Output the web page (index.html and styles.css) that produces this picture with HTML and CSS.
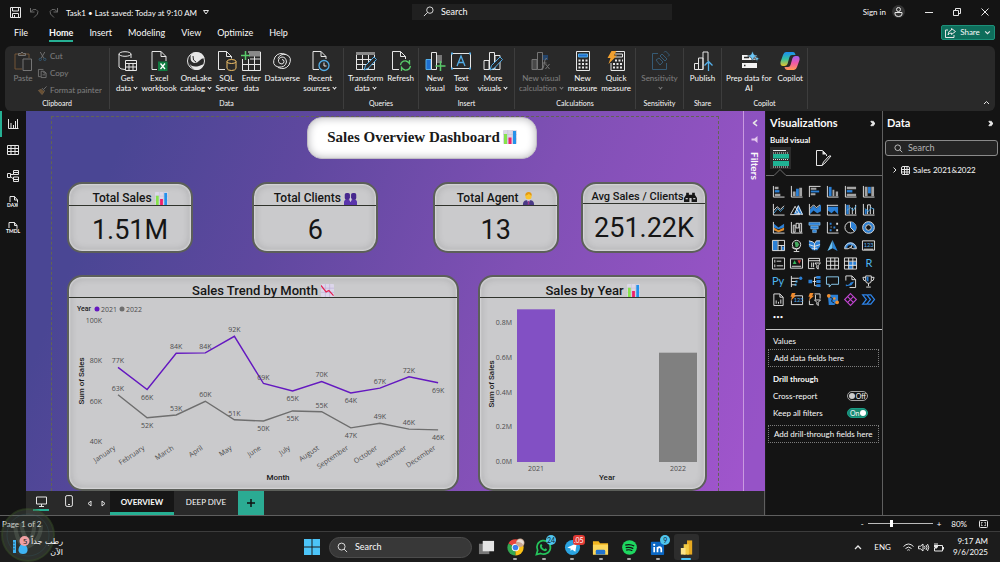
FILE: index.html
```html
<!DOCTYPE html>
<html lang="en">

<head>
  <meta charset="UTF-8">
  <meta name="viewport" content="width=device-width, initial-scale=1.0">
  <title>Task1 - Power BI</title>
  <link rel="stylesheet" href="styles.css">
</head>

<body>
  <!-- shared icons -->
  <svg class="sprite" aria-hidden="true">
    <symbol id="chart" viewBox="0 0 14 14">
      <rect width="14" height="14" rx="1" fill="#dcd8e6" />
      <path d="M0 4.5h14M0 9h14M4.7 0v14M9.3 0v14" stroke="#c3bdd6" stroke-width=".5" />
      <rect x="1" y="4" width="3" height="10" fill="#86e34c" />
      <rect x="5.5" y="7.5" width="3" height="6.5" fill="#f0206a" />
      <rect x="10" y="1" width="3" height="13" fill="#2492ea" />
    </symbol>
    <symbol id="chart-down" viewBox="0 0 14 14">
      <rect width="14" height="14" rx="1" fill="#dcd6ea" />
      <path d="M0 4.5h14M0 9h14M4.7 0v14M9.3 0v14" stroke="#b9a9d8" stroke-width=".6" />
      <path d="M0 1.5 3.5 6l2 2.5L8.5 7l5 5.5" fill="none" stroke="#e5204f" stroke-width="1.3" />
    </symbol>
    <symbol id="people" viewBox="0 0 14 14">
      <rect x=".8" y="1" width="5.6" height="7.5" rx="2" fill="#47288e" />
      <rect x="7.6" y="1" width="5.6" height="7.5" rx="2" fill="#47288e" />
      <path d="M0 14v-3q0-2.5 3.5-2.8Q6.5 8.5 7 10.5q.5-2 3.5-2.3Q14 8.5 14 11v3z" fill="#5a35ac" />
      <path d="M7 6v4.5M5.5 7.5h3" stroke="#d8d0ee" stroke-width=".7" />
    </symbol>
    <symbol id="agent" viewBox="0 0 14 14">
      <path d="M1 14q0-5 4-5h4q4 0 4 5z" fill="#4a3a86" />
      <path d="M5.5 8h3L7 13z" fill="#e9e6f4" />
      <path d="M6.6 9.5h.9l.5 4H6z" fill="#a03a8a" />
      <circle cx="7" cy="4.8" r="3.3" fill="#fbc52e" />
      <path d="M3.5 4q0-4 3.7-4 3.5 0 3.3 4-2-.5-3-2-1.5 1.5-4 2z" fill="#e59a12" />
    </symbol>
    <symbol id="scale" viewBox="0 0 12 10">
      <path d="M2 1h2.5v2h3V1H10v2l2 3v3.5H7V6H5v3.5H0V6l2-3z" fill="#161616" />
      <path d="M1.5 6.5h2M8.5 6.5h2" stroke="#c8c8ca" />
    </symbol>
    <symbol id="search" viewBox="0 0 12 12">
      <circle cx="7.5" cy="4.5" r="3.5" class="l" />
      <path d="M5 7 1 11" class="l" />
    </symbol>
    <symbol id="search-r" viewBox="0 0 12 12">
      <circle cx="5" cy="5" r="3.8" class="l" />
      <path d="m7.7 7.7 3.3 3.3" class="l" />
    </symbol>
    <symbol id="down" viewBox="0 0 6 6"><path d="m1 2 2 2 2-2" class="l" /></symbol>
    <symbol id="dbl" viewBox="0 0 6 8"><path d="m1 1 2.5 3L1 7M3 1l2.5 3L3 7" class="l" stroke-width="1.5" /></symbol>
  </svg>

  <header class="titlebar">
    <div class="title-left">
      <button aria-label="Save"><svg width="11" height="11" viewBox="0 0 11 11"><path d="M.5.5h10v10h-10zM2.5.5v3.5h6V.5M2.5 10.5V6.5h6v4M4.5 8v2" class="l" /></svg></button>
      <button class="dim" aria-label="Undo"><svg width="11" height="11" viewBox="0 0 11 11"><path d="M1.5 1v4h4M1.5 5Q4 1.5 7 2.5q3 1.5 1.5 4.5L5 10.5" class="l" /></svg></button>
      <button class="dim" aria-label="Redo"><svg width="11" height="11" viewBox="0 0 11 11"><path d="M9.5 1v4h-4M9.5 5Q7 1.5 4 2.5 1 4 2.5 7L6 10.5" class="l" /></svg></button>
      <span class="file-name">Task1 • Last saved: Today at 9:10 AM</span>
      <svg width="6" height="5" viewBox="0 0 6 5"><path d="M.5.5h5L3 4z" class="l" /></svg>
    </div>
    <label class="top-search">
      <svg width="11" height="11"><use href="#search" /></svg>
      <input type="search" placeholder="Search" aria-label="Search">
    </label>
    <div class="title-right">
      <a href="#" class="sign-in">Sign in</a>
      <span class="avatar"><svg width="9" height="10" viewBox="0 0 9 10"><circle cx="4.5" cy="2.5" r="2" class="l" /><path d="M1 5.5h7V7q0 2.5-3.5 2.5T1 7z" class="l" /></svg></span>
      <button aria-label="Minimize"><svg width="8" height="8" viewBox="0 0 8 8"><path d="M0 4.5h8" class="l" /></svg></button>
      <button aria-label="Restore"><svg width="8" height="8" viewBox="0 0 8 8"><path d="M.5 2.5h5v5h-5zM2.5 2V.5h5v5H6" class="l" /></svg></button>
      <button aria-label="Close"><svg width="8" height="8" viewBox="0 0 8 8"><path d="m.5.5 7 7M7.5.5l-7 7" class="l" /></svg></button>
    </div>
  </header>

  <nav class="menu">
    <a href="#">File</a>
    <a href="#" class="active">Home</a>
    <a href="#">Insert</a>
    <a href="#">Modeling</a>
    <a href="#">View</a>
    <a href="#">Optimize</a>
    <a href="#">Help</a>
    <button class="share">
      <svg width="11" height="10" viewBox="0 0 11 10"><path d="M3 2H.5v7.5H9V7M6.5.5l4 3-4 3V5Q4 5 3 7q0-4 3.5-5z" class="l" /></svg>
      Share
      <svg width="7" height="7"><use href="#down" /></svg>
    </button>
  </nav>

  <section class="ribbon">
    <div class="group clipboard">
      <div class="items">
        <button class="tool off"><svg viewBox="0 0 20 20"><path d="M9 18H2V3h14v4" fill="none" stroke="#e0954a" /><path d="M5.5 4.5v-2h2q1.500-3 3 0h2v2zM10 8h8.500v11.500H10z" class="l" /></svg>Paste</button>
        <div class="stack">
          <button class="off"><svg viewBox="0 0 10 10"><path d="m2.5 0 4 7M7.5 0l-4 7" class="l" /><circle cx="2.5" cy="8.2" r="1.3" class="bs" /><circle cx="7.5" cy="8.2" r="1.3" class="bs" /></svg>Cut</button>
          <button class="off"><svg viewBox="0 0 10 10"><path d="M3 8.5H.5v-8H6M3.5 2.5h3l2.5 2v5H3.5zM6.5 2.5v2H9M5 6.5h3" class="l" /></svg>Copy</button>
          <button class="off"><svg viewBox="0 0 10 10"><path d="m9.5.5-3 3M4.5 2.5l3 3" class="l" /><path d="M4 3.5.5 5l4 4.5L7 6" fill="#c78a45" stroke="#e0a868" /></svg>Format painter</button>
        </div>
      </div>
      <h2>Clipboard</h2>
    </div>
    <div class="group data">
      <div class="items">
        <button class="tool"><svg viewBox="0 0 20 20"><ellipse cx="8" cy="3" rx="6" ry="2.3" class="l" /><path d="M2 3v13q1 2.5 6 2.5M14 3v4" class="l" /><path d="M8.5 9.5h11v10h-11z" class="l" /><path d="M8.5 12.5h11M8.5 16h11M12 12.5v7M16 12.5v7" class="l" /></svg><span>Get<br>data<i></i></span></button>
        <button class="tool"><svg viewBox="0 0 20 20"><path d="M8 18.5H3V.5h9l5 5V10M12 .5v5h5" class="l" /><rect x="9" y="10.5" width="9.5" height="9.5" fill="#107c41" /><path d="m11.5 12.5 4.5 5.5M16 12.5 11.5 18" stroke="#fff" stroke-width="1.3" /></svg><span>Excel<br>workbook</span></button>
        <button class="tool"><svg viewBox="0 0 20 20"><circle cx="10" cy="10" r="8.5" class="l" /><path d="M5 3.5q2-2.5 5-2.5 7 0 8.5 6-3 0-5 2.5T8 12Q3 10 5 3.5zM3 12q3 5 10 3l5-2q-1 5-6 6t-9-7z" fill="#e6e6e6" /><path d="M7 5q-.5 5 3 6" stroke="#292929" fill="none" /></svg><span>OneLake<br>catalog<i></i></span></button>
        <button class="tool"><svg viewBox="0 0 20 20"><path d="M8 18.5H1.5V.5h8l5 5v2M9.5.5v5h5" class="l" /><ellipse cx="14.5" cy="10.5" rx="4.5" ry="2" class="y" /><path d="M10 10.5v7q1 2 4.5 2t4.5-2v-7" class="y" /></svg><span>SQL<br>Server</span></button>
        <button class="tool"><svg viewBox="0 0 20 20"><path d="M7 1h12.5v18.5h-18V8M1.5 13.5h18M9 8h10.5M7.5 8v11.5M13.5 2v17.5" class="l" /><path d="M8 1.5h11v4H8z" fill="#8a8a8a" /><path d="M4.5 0v9M0 4.5h9" stroke="#59c96a" stroke-width="1.5" /></svg><span>Enter<br>data</span></button>
        <button class="tool"><svg viewBox="0 0 20 20"><path d="M14 3.5Q7 .5 3 6q-4 8 3 10 7 1 8.5-5Q14 6 10 6q-4 1-3.5 4.5Q7 13 10 13M6 16.5q7 3 11-2.5 4-8-3-10.5-6-1-8 4M10 8.5q2 0 2 2t-2 2.5" class="l" /></svg><span>Dataverse</span></button>
        <button class="tool"><svg viewBox="0 0 20 20"><path d="M9 18.5H3V.5h8l5 5V8M11 .5v5h5" class="l" /><circle cx="14" cy="14.5" r="5" fill="#292929" stroke="#53aee8" stroke-width="1.3" /><path d="M14 11.5V15h2.5" class="l" /></svg><span>Recent<br>sources<i></i></span></button>
      </div>
      <h2>Data</h2>
    </div>
    <div class="group queries">
      <div class="items">
        <button class="tool"><svg viewBox="0 0 20 20"><path d="M.5 3.5h18v15H.5zM.5 8.5h18M.5 13.5h18M6.5 4v14.5M12.5 4v14.5" class="l" /><path d="M0 1h19v3H0z" fill="#8a8a8a" /><path d="m8 19 1.5-4.5L18 6l2.5 2.5L12.5 17z" fill="#292929" stroke="#53aee8" /></svg><span>Transform<br>data<i></i></span></button>
        <button class="tool"><svg viewBox="0 0 20 20"><path d="M8 18.5H1.5V.5h8l5 5V8M9.5.5v5h5" class="l" /><path d="M9.5 14q1-4.5 5.5-4 2 .5 3.5 2.5V9M19.5 15q-1 4.5-5.5 4-2-.5-3.5-2.5V20" stroke="#59c96a" stroke-width="1.3" fill="none" /></svg><span>Refresh</span></button>
      </div>
      <h2>Queries</h2>
    </div>
    <div class="group insert">
      <div class="items">
        <button class="tool"><svg viewBox="0 0 20 20"><path d="M12 4h5v8h-5z" fill="#777" /><path d="M1 8.5h5v10H1z" fill="#1e6fd0" stroke="#53aee8" /><path d="M6.5 1.5h5v17h-5z" class="l" /><path d="M15.5 10v10M10.5 15h10" stroke="#59c96a" stroke-width="1.5" /></svg><span>New<br>visual</span></button>
        <button class="tool"><svg viewBox="0 0 20 20"><path d="M.5 2.5h19v15H.5z" class="l" /><path d="M0 1.5h2v2H0zM18 1.5h2v2h-2zM0 16.5h2v2H0zM18 16.5h2v2h-2z" fill="#53aee8" /><path d="M6 15 10 5l4 10M7.5 11.5h5" stroke="#53aee8" stroke-width="1.3" fill="none" /></svg><span>Text<br>box</span></button>
        <button class="tool"><svg viewBox="0 0 20 20"><path d="M1 9.5h5v9H1zM6.5 1.5h5v17h-5zM12 4.5h5v14h-5z" class="l" /><path d="m7 19 1.5-4.5L17 6l2.5 2.5L11.5 17z" fill="#292929" stroke="#53aee8" /></svg><span>More<br>visuals<i></i></span></button>
      </div>
      <h2>Insert</h2>
    </div>
    <div class="group calc">
      <div class="items">
        <button class="tool off"><svg viewBox="0 0 20 20"><path d="M1 8.5h5v10H1z" fill="#777" /><path d="M1 8.5h5v10H1zM6.5 1.5h5v17h-5z" class="l" /><path d="M12 4h5v5h-5z" fill="#1e6fd0" /><path d="M10 18q2 1 2.5-2L14 9q.5-2 2-1.5M11.5 12h4M14.5 13l4 5M18.5 13l-4 5" class="l" /></svg><span>New visual<br>calculation<i></i></span></button>
        <button class="tool"><svg viewBox="0 0 20 20"><path d="M3.5.5h13v19h-13z" class="l" /><path d="M5.5 3h9v3h-9z" fill="#1e6fd0" stroke="#53aee8" /><path d="M5.5 9.5h9M5.5 13h9M5.5 16.5h9" class="l" stroke-dasharray="2 1.5" stroke-width="2" /></svg><span>New<br>measure</span></button>
        <button class="tool"><svg viewBox="0 0 20 20"><path d="M7 .5h11.5v19H5V12" class="l" /><path d="M9 3h7.5v3H9" class="l" /><path d="M9 9.5h8M7 13h10M7 16.5h10" class="l" stroke-dasharray="2 1.5" stroke-width="2" /><path d="M5.5 0h5L8 4.5h3L2.5 13l2-6h-3z" fill="#f0a030" /></svg><span>Quick<br>measure</span></button>
      </div>
      <h2>Calculations</h2>
    </div>
    <div class="group sens">
      <div class="items">
        <button class="tool off"><svg viewBox="0 0 20 20"><path d="M8 2.5H2.5v16h14V12" class="bs" /><path d="m6 9 3-2 4 4-3 3zM10 5l2-2 5 5-2 2zM14 1.5 15.5 0l4 4L18 5.5" class="bs" /></svg><span>Sensitivity<br><i></i></span></button>
      </div>
      <h2>Sensitivity</h2>
    </div>
    <div class="group pub">
      <div class="items">
        <button class="tool"><svg viewBox="0 0 20 20"><path d="M1.5 12.5h4v6h-4zM5.5 7H10v11.5H5.5zM10 18.5V1h5v9" class="l" /><path d="M15.5 20v-9M11.5 14.5l4-4 4 4" stroke="#53aee8" stroke-width="1.3" fill="none" /></svg><span>Publish</span></button>
      </div>
      <h2>Share</h2>
    </div>
    <div class="group copilot">
      <div class="items">
        <button class="tool"><svg viewBox="0 0 20 20"><path d="M3 4h15v5H3zM3 12h15v5H3z" fill="#f2f2f2" /><path d="M5 6.5h5M5 14.5h1.5" stroke="#292929" stroke-width="1.5" /><path d="m13.5 0 1.5 3.5L18.5 5 15 6.500 13.5 10 12 6.500 8.500 5 12 3.500zM18 5l.8 2 2 .8-2 .8L18 11l-.8-2.400-2-.8 2-.8z" fill="#6cc6f5" stroke="#292929" stroke-width=".6" /></svg><span>Prep data for<br>AI</span></button>
        <button class="tool"><svg viewBox="0 0 20 20">
            <defs>
              <linearGradient id="cpA" x1="0" y1="0" x2="0" y2="1"><stop offset="0" stop-color="#1a8df0" /><stop offset=".5" stop-color="#35bfa0" /><stop offset="1" stop-color="#e8c52c" /></linearGradient>
              <linearGradient id="cpB" x1="0" y1="0" x2="0" y2="1"><stop offset="0" stop-color="#a060f0" /><stop offset=".5" stop-color="#ee58a8" /><stop offset="1" stop-color="#ff9a52" /></linearGradient>
            </defs>
            <path d="M6 1h7q2 0 2.5 3H12q-2 0-2.5 2l-2 7q-.8 2-3 2H3q-3 0-2.500-4L3 4q1-3 3-3z" fill="url(#cpA)" />
            <path d="M14 19H7.500Q5 19 4.500 16H8q2 0 2.500-2l2-7q.8-2 3-2H17q3 0 2.500 4L17 16q-1 3-3 3z" fill="url(#cpB)" />
          </svg><span>Copilot</span></button>
      </div>
      <h2>Copilot</h2>
    </div>
    <button class="collapse" aria-label="Collapse ribbon"><svg width="7" height="5" viewBox="0 0 7 5"><path d="m1 4 2.5-2.5L6 4" class="l" /></svg></button>
  </section>

  <main>
    <nav class="rail">
      <button class="active" aria-label="Report view"><svg viewBox="0 0 12 12"><path d="M1.5 1v9.5h10M4 5v5M6.5 7v3M8.5 3v7M10.5 1v9" class="l" /></svg></button>
      <button aria-label="Table view"><svg viewBox="0 0 12 12"><path d="M.5 1.5h11v9H.5zM.5 4.5h11M.5 7.5h11M4 1.5v9M8 1.5v9" class="l" /></svg></button>
      <button aria-label="Model view"><svg viewBox="0 0 12 12"><path d="M.5 3.5h3v4h-3zM6.5.5h5v4h-5zM6.5 7h5v4.5h-5zM3.5 4.5h3M3.5 6.5 6.5 9M7 2.5h4M7 9.5h4" class="l" /></svg></button>
      <button aria-label="DAX query view"><svg viewBox="0 0 12 12"><path d="M3 6V.5h4.5L10.5 4v6M7.5.5V4h3" class="l" /><text x="0" y="11">DAX</text></svg></button>
      <button aria-label="TMDL view"><svg viewBox="0 0 12 12"><path d="M2 6V.5h5.5L10 3.5V7M7.5.5v3H10" class="l" /><text x="-1" y="11">TMDL</text></svg></button>
    </nav>

    <div class="report">
      <div class="stage">
        <div class="canvas">
          <h1>Sales Overview Dashboard <svg width="14" height="14"><use href="#chart" /></svg></h1>
          <div class="kpis">
            <article class="card">
              <h3>Total Sales <svg><use href="#chart" /></svg></h3>
              <p>1.51M</p>
            </article>
            <article class="card">
              <h3>Total Clients <svg><use href="#people" /></svg></h3>
              <p>6</p>
            </article>
            <article class="card">
              <h3>Total Agent <svg><use href="#agent" /></svg></h3>
              <p>13</p>
            </article>
            <article class="card small">
              <h3>Avg Sales / Clients<svg><use href="#scale" /></svg></h3>
              <p>251.22K</p>
            </article>
          </div>
          <div class="charts">
            <article class="card">
              <h3>Sales Trend by Month <svg><use href="#chart-down" /></svg></h3>
              <svg id="trend" class="plot" viewBox="0 0 388 190"></svg>
            </article>
            <article class="card">
              <h3>Sales by Year <svg><use href="#chart" /></svg></h3>
              <svg id="years" class="plot" viewBox="0 0 225 190"></svg>
            </article>
          </div>
        </div>
        <aside class="filters">
          <button aria-label="Expand filters"><svg width="6" height="8" viewBox="0 0 6 8"><path d="M5 1 2 4l3 3M3 2.5 1.5 4 3 5.5" class="l" stroke-width="1.5" /></svg></button>
          <svg width="7" height="7" viewBox="0 0 7 7"><path d="M6.5 0v7l-3-2.5h-3v-2h3z" fill="#e3c6ee" /></svg>
          <span>Filters</span>
        </aside>
      </div>
      <div class="pages">
        <button class="device on" aria-label="Desktop layout"><svg width="11" height="11" viewBox="0 0 11 11"><path d="M.5 1h10v7H.5zM5.5 8v2.5M3 10.5h5" class="l" /></svg></button>
        <button class="device" aria-label="Mobile layout"><svg width="8" height="12" viewBox="0 0 8 12"><rect x=".6" y=".6" width="6.8" height="10.8" rx="1.5" class="l" /><path d="M3 9.5h2" class="l" /></svg></button>
        <button class="step" aria-label="Previous page"><svg width="5" height="7" viewBox="0 0 5 7"><path d="M4 1v5L1 3.5z" class="l" /></svg></button>
        <button class="step" aria-label="Next page"><svg width="5" height="7" viewBox="0 0 5 7"><path d="M1 1v5l3-2.5z" class="l" /></svg></button>
        <button class="tab on">OVERVIEW</button>
        <button class="tab">DEEP DIVE</button>
        <button class="add" aria-label="New page"><svg width="8" height="8" viewBox="0 0 8 8"><path d="M4 0v8M0 4h8" stroke="#111" stroke-width="1.5" /></svg></button>
      </div>
    </div>

    <aside class="pane viz">
      <header>
        <h2>Visualizations</h2>
        <button aria-label="Collapse visualizations"><svg width="5" height="7"><use href="#dbl" /></svg></button>
      </header>
      <h4>Build visual</h4>
      <div class="modes">
        <button class="on" aria-label="Build visual"><svg width="16" height="17" viewBox="0 0 16 17"><path d="M0 .5h13" class="l" /><path d="M0 4h16v4.5H0zM0 11h16v5H0z" fill="#1fb394" /><path d="M0 3h16M0 9.5h16M0 17h16" stroke="#ddd" stroke-dasharray="1 1" /></svg></button>
        <button aria-label="Format visual"><svg width="17" height="17" viewBox="0 0 17 17"><path d="M7 15.5H1.5V.5h6l4 4V6" class="l" /><path d="M7.5.5v4h4z" fill="#dedede" /><path d="m16 6-6 7-3 2.5L8.5 12 14 6z" class="l" /></svg></button>
      </div>
      <svg class="notch" viewBox="0 0 117 8" preserveAspectRatio="xMinYMin slice"><path d="M0 6.5h8l6-6 6 6h180" fill="none" stroke="#6d6d6d" /></svg>
      <div class="visuals">
        <button aria-label="Stacked bar"><svg viewBox="0 0 14 14"><path d="M1.5 1v12h12" class="l" /><path d="M3 2h4v2.5H3zM3 9.5h6V12H3z" class="g" /><path d="M3 5.5h5V8H3z" class="b" /></svg></button>
        <button aria-label="Stacked column"><svg viewBox="0 0 14 14"><path d="M1.5 1v12h12" class="l" /><path d="M3 7h3v5H3zM10 3h3v9h-3z" class="g" /><path d="M6.500 4h3v8h-3z" class="b" /></svg></button>
        <button aria-label="Clustered bar"><svg viewBox="0 0 14 14"><path d="M1.5 1v12M1.5 1.5h12" class="l" /><path d="M3 3h6v2H3zM3 9h5v2H3z" class="g" /><path d="M3 6h9v2H3z" class="b" /></svg></button>
        <button aria-label="Clustered column"><svg viewBox="0 0 14 14"><path d="M1.5 1v12h12" class="l" /><path d="M3 2h3v10H3z" class="b" /><path d="M7 5h2v7H7zM10.5 7H13v5h-2.5z" class="g" /></svg></button>
        <button aria-label="100% stacked bar"><svg viewBox="0 0 14 14"><path d="M1.5 1v12h12" class="l" /><path d="M3 2h10v2.5H3zM3 9.5h10V12H3z" class="g" /><path d="M3 5.5h6V8H3z" class="b" /></svg></button>
        <button aria-label="100% stacked column"><svg viewBox="0 0 14 14"><path d="M1.5 1v12h12" class="l" /><path d="M3 2h3v10H3zM10 2h3v10h-3z" class="g" /><path d="M6.5 2h3v7h-3z" class="b" /></svg></button>
        <button aria-label="Line"><svg viewBox="0 0 14 14"><path d="M1.5 1v12h12M2 8l3.5-4L9 7l4-4" class="l" /><path d="m2 11 4-5 3 3 4-4" class="bs" /></svg></button>
        <button aria-label="Area"><svg viewBox="0 0 14 14"><path d="m4 12 5-10 5 10z" class="b" /><path d="m.5 12.5 5-9 5 9zM5.5 10.5 9 3l4.500 9.500z" class="l" /></svg></button>
        <button aria-label="Stacked area"><svg viewBox="0 0 14 14"><path d="m2 7 4-4 3 3 5-4v7l-4 2-4-3-4 4z" class="b" /><path d="M1.5 1v12h12M2 6l4-4 3 3 4-3" class="l" /></svg></button>
        <button aria-label="100% stacked area"><svg viewBox="0 0 14 14"><path d="M2 4h11v8L9 8l-3 3-4-3z" class="b" /><path d="M1 2.5h12M1.5 2v11h12" class="l" /></svg></button>
        <button aria-label="Line and stacked column"><svg viewBox="0 0 14 14"><path d="M1.5 1v12h12M5.5 2v10M9 5v7M12.5 2v10" class="l" /><path d="M2.5 2H5v10H2.5z" class="b" /><path d="m3 8 4-3 3 3 3-5" class="bs" /></svg></button>
        <button aria-label="Line and clustered column"><svg viewBox="0 0 14 14"><path d="M1.5 1v12h12M6 2v10M9 2v10M12.5 6v6M6 2h3" class="l" /><path d="M3 7h2v5H3z" class="b" /><path d="m3 6 4 3 3-4 3 2" class="bs" /></svg></button>
        <button aria-label="Ribbon"><svg viewBox="0 0 14 14"><path d="m2 3 5 4 6-4v4L7 9 2 7z" class="b" /><path d="m2 7 5 3 6-3v3l-6 2-5-2z" fill="#e08a2c" /><path d="M1.5 1v12h12" class="l" /></svg></button>
        <button aria-label="Waterfall"><svg viewBox="0 0 14 14"><path d="M1.5 1v12h12M3.5 4.5h2V12h-2zM6.5 2.5h3v5h-3zM10.5 2.5h2V12h-2z" class="l" /></svg></button>
        <button aria-label="Funnel"><svg viewBox="0 0 14 14"><path d="M1 1.5h12v3H1zM3 5.5h8v3H3zM5 9.5h4v3H5z" class="b" stroke="#9fd0f5" stroke-width=".6" /></svg></button>
        <button aria-label="Scatter"><svg viewBox="0 0 14 14"><path d="M1.5 1v12h12" class="l" /><path d="M4 2h2v2H4zM8 6h2v2H8zM4 9h2v2H4z" class="b" /><path d="M11 2h2v2h-2zM5 6h1v1H5zM11 9h2v2h-2z" fill="#ddd" /></svg></button>
        <button aria-label="Pie"><svg viewBox="0 0 14 14"><circle cx="7" cy="7" r="6" class="l" /><path d="M7 1a6 6 0 0 1 4.3 10.2L7 7z" class="b" /><path d="M7 1v6l4.3 4.2" class="l" /></svg></button>
        <button aria-label="Donut"><svg viewBox="0 0 14 14"><circle cx="7" cy="7" r="4.7" fill="none" stroke="#2e7fd0" stroke-width="3" /><circle cx="7" cy="7" r="6.3" class="l" /><circle cx="7" cy="7" r="3" class="l" /></svg></button>
        <button aria-label="Treemap"><svg viewBox="0 0 14 14"><path d="M1 1.5h5v11H1zM10.5 8h3v4h-3z" class="b" /><path d="M.5 1.5h13v11H.5zM6.5 1.5v11M6.5 7h7M10 7v5.5" class="l" /></svg></button>
        <button aria-label="Map"><svg viewBox="0 0 14 14"><circle cx="7" cy="6" r="4.5" class="l" /><path d="M5 3h3l2 3-2 3H6z" fill="#45a860" /><path d="M2 9q5 4 9 0M7 11v2M4 13.5h6" class="l" /></svg></button>
        <button aria-label="Filled map"><svg viewBox="0 0 14 14"><path d="m1 2 4 1 2 2 2-3h4v6l-3 4H5L1 8z" class="b" /><path d="m1 2 4 1 2 2 2-3h4M1 6l6 2 6-2M7 5v7M4 10h6" class="l" /></svg></button>
        <button aria-label="Azure map"><svg viewBox="0 0 14 14"><path d="m7 1 5.5 12L7 10z" fill="#2a86d8" /><path d="M7 1 1.5 13 7 10z" fill="#6cc2f4" /></svg></button>
        <button aria-label="Gauge"><svg viewBox="0 0 14 14"><path d="M2 10a5 5 0 0 1 10 0" fill="none" stroke="#2e7fd0" stroke-width="3" /><path d="M.7 10.5a6.3 6.3 0 0 1 12.6 0H9.5q-2.5-3-5 0zM7 10 9 6" class="l" /></svg></button>
        <button aria-label="Card"><svg viewBox="0 0 14 14"><path d="M.5 2h13v10H.5z" class="l" /><text x="2" y="9">123</text><path d="M2 11h10" class="l" /></svg></button>
        <button aria-label="Multi-row card"><svg viewBox="0 0 14 14"><path d="M.5 1h13v12H.5zM3 3v3M3 8v3M5 4.5h5M5 9.5h7" class="l" /></svg></button>
        <button aria-label="KPI"><svg viewBox="0 0 14 14"><path d="M.5 2h13v10H.5zM2 10h10" class="l" /><path d="m3 7.5 2-4 2 4z" fill="#35b558" /><path d="m8 3.5 2 4 2-4z" fill="#e03a3a" /></svg></button>
        <button aria-label="Slicer"><svg viewBox="0 0 14 14"><path d="M7 12.5H.5v-11h12V5M.5 4h12M4 6v5M6 6v5M7.5 6.5h6L11 9v4l-1.5-1V9z" class="l" /></svg></button>
        <button aria-label="Table"><svg viewBox="0 0 14 14"><path d="M.5 1h13v12H.5zM.5 4.5h13M.5 9h13M5 1v12M9.5 1v12" class="l" /></svg></button>
        <button aria-label="Matrix"><svg viewBox="0 0 14 14"><path d="M5 5h8v4H9v4H5z" class="b" /><path d="M.5 1h13v12H.5zM.5 4.5h13M.5 9h13M5 1v12M9.5 1v12" class="l" /></svg></button>
        <button class="letter">R</button>
        <button class="letter">Py</button>
        <button aria-label="Key influencers"><svg viewBox="0 0 14 14"><path d="M1.5 1v12M1.5 3.5h8M1.5 7h5M1.5 10.5h4" class="l" /><circle cx="11.5" cy="3.5" r="1.8" class="b" /><path d="M6 7h2M5 10.5h2" stroke="#53aee8" stroke-width="2" /></svg></button>
        <button aria-label="Decomposition tree"><svg viewBox="0 0 14 14"><path d="M5 7h4M7 2.5v9M7 2.5h3M7 11.5h3" class="l" /><path d="M.5 5h4v4h-4zM9 1h4.5v3H9zM9 5.5h4.5v3H9zM9 10h4.5v3H9z" class="b" /></svg></button>
        <button aria-label="Q&amp;A"><svg viewBox="0 0 14 14"><path d="M.5 2h13v8H6l-2.5 3v-3h-3z" fill="none" stroke="#8fd0f5" /></svg></button>
        <button aria-label="Narrative"><svg viewBox="0 0 14 14"><path d="M2 6V1h6.5l4 4v8.5H6M8.5 1v4h4" class="l" /><path d="M2 10q3 2 5-2l4-1-3 4-6 1z" class="b" /></svg></button>
        <button aria-label="Metrics"><svg viewBox="0 0 14 14"><path d="M4 1h6v5q0 3-3 3T4 6zM4 2.5H1q0 4 3 4M10 2.5h3q0 4-3 4M7 9v3M4.5 13h5" class="l" /><path d="M5 2h2v5q-2 0-2-2z" class="b" /></svg></button>
        <button aria-label="Paginated report"><svg viewBox="0 0 14 14"><path d="M2 1h6.5L12 4.5v9H2zM8.5 1v3.5H12M4.5 8v3.5M7 9.5v2M9.5 7v4.5" class="l" /></svg></button>
        <button aria-label="Card (new)"><svg viewBox="0 0 14 14"><path d="M4 3h9.5v9.5h-12V8" class="l" /><text x="4" y="10">123</text><path d="M2 0h4L4.5 3h2L1 8l1-4H.5z" fill="#f08a2c" /></svg></button>
        <button aria-label="Button slicer"><svg viewBox="0 0 14 14"><path d="M7 1h6v5M1.5 8v4.5H6M8 2v5M7 7.5h6.5L11 10v3.5L9.5 12v-2z" class="l" /><path d="M2 0h4L4.5 3h2L1 8l1-4H.5z" fill="#f08a2c" /></svg></button>
        <button aria-label="ArcGIS"><svg viewBox="0 0 14 14"><path d="M2 2h11v6L9 13H3z" class="b" /><path d="m4 4 3 2-1 3 3 2" stroke="#141414" fill="none" /><circle cx="3" cy="3" r="2" class="o" /><circle cx="9" cy="6" r="1.3" class="o" /><circle cx="12" cy="10" r="2" class="o" /></svg></button>
        <button aria-label="Power Apps"><svg viewBox="0 0 14 14"><path d="M7 .7 13.3 7 7 13.3.7 7zM4 4l6 6M10 4l-6 6" fill="none" stroke="#c044d0" stroke-width="1.2" /></svg></button>
        <button aria-label="Power Automate"><svg viewBox="0 0 14 14"><path d="M.7 2h4.500l4 5-4 5H.7l4-5zM6 2h3.500l4 5-4 5H6" fill="none" stroke="#2d84ea" stroke-width="1.3" /></svg></button>
        <button class="more" aria-label="More visuals">•••</button>
      </div>
      <div class="wells">
        <h5>Values</h5>
        <div class="drop">Add data fields here</div>
        <h5 class="bold">Drill through</h5>
        <label class="switch">Cross-report<span><input type="checkbox" role="switch"><b>Off</b></span></label>
        <label class="switch">Keep all filters<span><input type="checkbox" role="switch" checked><b>On</b></span></label>
        <div class="drop">Add drill-through fields here</div>
      </div>
    </aside>

    <aside class="pane fields">
      <header>
        <h2>Data</h2>
        <button aria-label="Collapse data"><svg width="5" height="7"><use href="#dbl" /></svg></button>
      </header>
      <label class="field-search">
        <svg width="9" height="9"><use href="#search-r" /></svg>
        <input type="search" placeholder="Search" aria-label="Search fields">
      </label>
      <button class="table-row">
        <svg width="4" height="6" viewBox="0 0 4 6"><path d="M.5.5 3 3 .5 5.5" class="l" /></svg>
        <svg width="9" height="9" viewBox="0 0 9 9"><rect x=".5" y=".5" width="8" height="8" rx="1.5" class="l" /><path d="M.5 3.5h8M.5 6h8M3.5.5v8M6 .5v8" class="l" /></svg>
        Sales 2021&amp;2022
      </button>
    </aside>
  </main>

  <footer class="status">
    <span>Page 1 of 2</span>
    <div class="zoom">
      <button aria-label="Zoom out">-</button>
      <input type="range" min="10" max="200" value="80" aria-label="Zoom">
      <button aria-label="Zoom in">+</button>
      <span>80%</span>
      <button aria-label="Fit to page"><svg width="9" height="8" viewBox="0 0 9 8"><rect x=".5" y=".5" width="8" height="7" rx="1" class="l" /><path d="M2.5 3.5v-1h1M6.5 3.5v-1h-1M2.5 4.5v1h1M6.5 4.5v1h-1" class="l" /></svg></button>
    </div>
  </footer>

  <footer class="taskbar">
    <svg class="seal" viewBox="0 0 56 56" aria-hidden="true"><circle cx="28" cy="28" r="26" fill="#5d6b60" fill-opacity=".4" stroke="#3f5a2c" stroke-opacity=".6" stroke-width="2" /><circle cx="28" cy="28" r="21" fill="none" stroke="#3c6674" stroke-opacity=".4" /><path d="M15 18q2 20 12 22 14-6 14-22M21 16q2 14 8 18 6-6 5-20" fill="none" stroke="#82907f" stroke-opacity=".4" stroke-width="4" /></svg>
    <div class="weather">
      <svg width="18" height="18" viewBox="0 0 18 18"><path d="M1 4h3v13H1z" fill="#3fb4f4" /><path d="M1 7h2M1 10h2M1 13h2" stroke="#1c1c1c" stroke-width=".6" /><path d="M11 6q5 5 4.5 8.5T11 18t-4.500-3.500T11 6z" fill="#3fb4f4" /><circle cx="12.5" cy="5" r="5" fill="#f0a0a4" /><text x="11" y="8">5</text></svg>
      <span lang="ar" dir="rtl">رطب جداً<br>الآن</span>
    </div>
    <button class="app" aria-label="Start"><svg width="16" height="16" viewBox="0 0 16 16"><path d="M0 0h7.5v7.500H0zM8.500 0H16v7.500H8.500zM0 8.500h7.500V16H0zM8.500 8.500H16V16H8.500z" fill="#4cc4f8" /></svg></button>
    <label class="task-search">
      <svg width="11" height="11"><use href="#search-r" /></svg>
      <input type="search" placeholder="Search" aria-label="Search Windows">
    </label>
    <div class="apps">
      <button class="app" aria-label="Task view"><svg viewBox="0 0 18 18"><path d="M1 5h11v11H1z" fill="#777" /><path d="M5 2h12v11H5z" fill="#e4e4e4" /></svg></button>
      <button class="app run" aria-label="Chrome"><svg viewBox="0 0 18 18"><path d="M9 9 1.5 4.7A8.6 8.6 0 0 1 16.5 4.7z" fill="#e8453c" /><path d="M9 9 1.5 4.7A8.6 8.6 0 0 0 9 17.5z" fill="#33a852" /><path d="m9 9 7.5-4.3A8.6 8.6 0 0 1 9 17.5z" fill="#fbc116" /><circle cx="9" cy="9" r="4" fill="#fff" /><circle cx="9" cy="9" r="3" fill="#3a80ee" /><circle cx="14" cy="4" r="4.5" fill="#c9a893" /><path d="M10 3q2-4 6-2 3 2 1 5-2-3-7-3z" fill="#e9dfd8" /></svg></button>
      <button class="app run" aria-label="WhatsApp"><svg viewBox="0 0 18 18"><path d="m1.5 16.5 1.3-4.3A7.2 7.2 0 1 1 6 15.3z" fill="none" stroke="#25c45c" stroke-width="1.8" /><path d="M6 5.5q1-1 1.8 1.5l-.6 1.2q1 2 2.800 2.600l1.200-1q2.300.9 1.300 2-1.500 2-4.500.2T5.200 8q-.2-1.500.8-2.500z" fill="#25c45c" /></svg><em>24</em></button>
      <button class="app run" aria-label="Telegram"><svg viewBox="0 0 18 18"><circle cx="9" cy="9" r="8" fill="#2aa3e0" /><path d="m3.5 9 10-4.500-1.500 9L8.500 11 7 12.800V10z" fill="#fff" /></svg><em class="red">.05</em></button>
      <button class="app run" aria-label="File Explorer"><svg viewBox="0 0 18 18"><path d="M1 2.5h6l1.5 2H17v12H1z" fill="#f3b51f" /><path d="M1 6h16v10.5H1z" fill="#fcd75c" /><path d="M4 16.5V13q0-1.500 1.500-1.500h7q1.500 0 1.500 1.500v3.500z" fill="#2274d0" /></svg></button>
      <button class="app run" aria-label="Spotify"><svg viewBox="0 0 18 18"><circle cx="9" cy="9" r="7.8" fill="#1ed760" /><path d="M4.5 6.5q5-1.500 9.500 1M5 9.200q4-1.200 8 1M5.500 11.700q3.500-.9 6.500.8" fill="none" stroke="#111" stroke-width="1.3" /></svg></button>
      <button class="app run" aria-label="LinkedIn"><svg viewBox="0 0 18 18"><rect x="2" y="3" width="14" height="14" rx="1" fill="#0a66c2" /><path d="M5.5 8.5V14M9 8.5V14M9 11q0-2.500 2-2.500t2 2.500v3" fill="none" stroke="#fff" stroke-width="1.8" /><circle cx="5.5" cy="6.2" r="1.2" fill="#fff" /></svg><em>9</em></button>
      <button class="app run current" aria-label="Power BI"><svg viewBox="0 0 18 18"><path d="M9.5 1.500H15v15H9.500z" fill="#e6a820" /><path d="M6 5.500h5.500v11H6z" fill="#f3cb45" /><path d="M3 9.500h5v7H3z" fill="#fbe38a" /></svg></button>
    </div>
    <div class="tray">
      <svg width="8" height="6" viewBox="0 0 8 6"><path d="m1 5 3-3 3 3" class="l" stroke-width="1.3" /></svg>
      <span class="lang">ENG</span>
      <svg width="11" height="9" viewBox="0 0 11 9"><path d="M.5 3.5q5-5 10 0M2.5 5.5q3-3 6 0M4.3 7.3q1.200-1.200 2.400 0" class="l" /></svg>
      <svg width="11" height="9" viewBox="0 0 11 9"><path d="M.5 3.2h2L5 1v7L2.5 5.800h-2zM6.500 3q1 1.500 0 3M8 2q2 2.500 0 5M9.500 1q2.500 3.500 0 7" class="l" /></svg>
      <svg width="11" height="9" viewBox="0 0 11 9"><path d="M4 2.5h5.5V8h-8V5M10.5 4v2.500M2 0v3M4 0v3" class="l" /><path d="M1 2h4v2L3 6 1 4z" fill="#e6e6e6" /></svg>
      <time>9:17 AM<br>9/6/2025</time>
    </div>
  </footer>

  <script src="charts.js"></script>
</body>

</html>
```

FILE: styles.css
```css
:root {
  --bg: #141414;
  --panel: #292929;
  --line: #5f5f5f;
  --text: #fafafa;
  --accent: #26b094;
}

* {
  box-sizing: border-box;
}

body {
  margin: 0;
  height: 100vh;
  display: flex;
  flex-direction: column;
  overflow: hidden;
  color: var(--text);
  background-color: var(--bg);
  font: 8px/10px Lato, "Noto Sans", sans-serif;
}

h1, h2, h3, h4, h5, p {
  margin: 0;
}

button {
  display: flex;
  align-items: center;
  justify-content: center;
  padding: 0;
  border: 0;
  color: inherit;
  background: none;
  font: inherit;
  white-space: nowrap;
}

a {
  color: inherit;
  text-decoration: none;
}

input {
  min-width: 0;
  padding: 0;
  border: 0;
  outline: 0;
  color: inherit;
  background: none;
  font: inherit;
}

input::placeholder {
  color: inherit;
  opacity: 1;
}

svg {
  flex: none;
  overflow: visible;
}

.sprite {
  position: absolute;
  width: 0;
  height: 0;
}

/* icon strokes and fills */
.l { stroke: #e6e6e6; fill: none; }
.bs { stroke: #4ba5e4; fill: none; }
.y { stroke: #f0c068; fill: none; }
.b { fill: #2b80d6; }
.g { fill: #a4a4a4; }
.o { fill: #f09030; }

/* title bar */
.titlebar {
  display: flex;
  align-items: center;
  height: 23px;
}

.title-left {
  display: flex;
  flex: 1;
  align-items: center;
  gap: 8px;
  padding: 2px 0 0 10px;
}

.title-left .dim {
  opacity: .4;
}

.file-name {
  margin: 0 -2px 0 -1px;
}

.top-search {
  display: flex;
  align-items: center;
  gap: 7px;
  width: 26%;
  height: 16px;
  padding-left: 11px;
  background-color: #202020;
  font-size: 9px;
}

.title-right {
  display: flex;
  align-items: center;
  justify-content: flex-end;
  gap: 20px;
  width: 328px;
  padding-right: 11px;
}

.avatar {
  display: flex;
  align-items: center;
  justify-content: center;
  width: 13px;
  height: 13px;
  margin-left: -14px;
  border-radius: 50%;
  background-color: #333;
}

/* menu */
.menu {
  display: flex;
  align-items: flex-start;
  gap: 16px;
  height: 23px;
  padding: 3px 5px 0 14px;
  font-size: 9px;
  line-height: 13px;
}

.menu a {
  padding-bottom: 1px;
  border-bottom: 2px solid transparent;
}

.menu a:first-child {
  margin-right: 5px;
}

.menu .active {
  border-color: var(--accent);
  font-weight: bold;
}

.share {
  gap: 4px;
  width: 54px;
  height: 15px;
  margin: -1px 0 0 auto;
  border: 1px solid #1c9079;
  border-radius: 2px;
  background-color: #0e6d5b;
  font-size: 8px;
}

/* ribbon */
.ribbon {
  position: relative;
  display: flex;
  flex: none;
  height: 65px;
  margin: 0 5px;
  padding: 2px 0;
  border-radius: 6px;
  background-color: var(--panel);
}

.group {
  display: flex;
  flex-direction: column;
  justify-content: space-between;
  padding: 3px 6px 1px;
  border-right: 1px solid #3d3d3d;
}

.group h2 {
  font-size: 7px;
  font-weight: normal;
  text-align: center;
}

.items {
  display: flex;
  justify-content: space-between;
}

.tool {
  flex-direction: column;
  justify-content: flex-start;
  gap: 2px;
}

.tool svg {
  width: 20px;
  height: 20px;
}

.tool i {
  display: inline-block;
  width: 3px;
  height: 3px;
  margin: 0 1px 2px 3px;
  border: solid currentColor;
  border-width: 0 1px 1px 0;
  transform: rotate(45deg);
}

.off {
  opacity: .4;
}

.clipboard { width: 105px; }
.data { width: 234px; }
.queries { width: 75px; }
.insert { width: 96px; }
.calc { width: 121px; }
.sens { width: 48px; }
.pub { width: 38px; }
.copilot { width: 86px; }

.queries .items,
.calc .items,
.copilot .items {
  margin: 0 -2px;
}

.sens .items,
.pub .items {
  justify-content: center;
}

.clipboard .items {
  justify-content: flex-start;
  gap: 5px;
  height: 44px;
  padding-left: 2px;
}

.stack {
  display: flex;
  flex-direction: column;
  gap: 7px;
}

.stack button {
  justify-content: flex-start;
  gap: 3px;
}

.stack svg {
  width: 9px;
  height: 9px;
}

.collapse {
  position: absolute;
  right: 5px;
  bottom: 6px;
}

/* main area */
main {
  display: flex;
  flex: 1;
  min-height: 0;
  border-bottom: 1px solid var(--line);
}

.rail {
  flex: none;
  width: 26px;
}

.rail button {
  width: 100%;
  height: 26px;
  padding-right: 2px;
  border-left: 2px solid transparent;
}

.rail .active {
  border-color: var(--accent);
}

.rail svg {
  width: 12px;
  height: 12px;
}

.rail text {
  fill: #fff;
  stroke: #141414;
  stroke-width: 1px;
  paint-order: stroke;
  font-size: 5px;
  font-weight: bold;
}

.report {
  display: flex;
  flex: 1;
  flex-direction: column;
  min-width: 0;
}

.stage {
  display: flex;
  flex: 1;
  min-height: 0;
  background: linear-gradient(112deg, #4a4694 12%, #5f489f 33%, #8050b5 62%, #a055cc 97%);
}

.canvas {
  flex: 1;
  margin: 5px 24px 0 25px;
  padding: 0 11px 0 15px;
  border: 1px dashed #626455;
  border-bottom: 0;
}

.canvas h1 {
  display: flex;
  align-items: center;
  justify-content: center;
  gap: 3px;
  width: 230px;
  height: 42px;
  margin-left: 37.5%;
  padding-bottom: 2px;
  border: 1px solid #c0bcc4;
  border-radius: 15px;
  background-color: #fff;
  box-shadow: inset 0 0 9px #b4b4b8;
  color: #1a1a1a;
  font: bold 15px/20px "Liberation Serif", serif;
}

.kpis {
  display: grid;
  grid-template-columns: 185fr 180fr 148fr 126px;
  margin: 23px 0 22px;
}

.card {
  overflow: hidden;
  border: 2px solid #5c5f5a;
  border-radius: 15px;
  background-color: #cacacc;
  box-shadow: inset 0 0 2px 1px #dcdcde, inset 0 0 9px rgba(0, 0, 0, .2);
  color: #151515;
  font-family: Roboto, sans-serif;
}

.card h3 {
  display: flex;
  align-items: flex-end;
  justify-content: center;
  gap: 3px;
  height: 22px;
  border-bottom: 1px solid #30332c;
  font-size: 12px;
  font-weight: 500;
  line-height: 13px;
}

.card h3 svg {
  width: 13px;
  height: 13px;
}

.kpis .card {
  width: 126px;
  height: 71px;
}

.kpis p {
  font-size: 27px;
  line-height: 49px;
  text-align: center;
}

.kpis .small h3 {
  gap: 0;
  height: 20px;
  font-size: 11px;
  line-height: 12px;
}

.kpis .small h3 svg {
  height: 12px;
}

.charts {
  display: grid;
  grid-template-columns: 392fr 229fr;
  gap: 19px;
}

.charts .card {
  padding-bottom: 1px;
}

.charts h3 {
  height: 21px;
  font-size: 13px;
}

.plot {
  display: block;
  width: 100%;
}

.plot text {
  fill: #4c4c4c;
  font: 7px "Open Sans", "Noto Sans", sans-serif;
}

.plot .axis {
  fill: #1c1c1c;
  font: 500 8px Roboto, sans-serif;
}

.plot .legend {
  font-size: 7px;
}

.filters {
  display: flex;
  flex-direction: column;
  align-items: center;
  gap: 9px;
  width: 22px;
  padding-top: 8px;
  border-left: 1px solid #c99ae0;
  background-color: rgba(130, 80, 190, .3);
}

.filters span {
  writing-mode: vertical-rl;
  font-size: 10px;
  font-weight: bold;
}

/* page tabs */
.pages {
  display: flex;
  flex: none;
  height: 24px;
  background-color: var(--panel);
  border-right: 1px solid var(--line);
}

.device {
  width: 16px;
  margin: 0 5px 4px 7px;
  border-bottom: 2px solid transparent;
}

.device.on {
  border-color: var(--accent);
}

.device svg {
  margin-top: 2px;
}

.step {
  width: 14px;
}

.tab {
  width: 64px;
  border-bottom: 3px solid transparent;
}

.tab.on {
  border-bottom-color: var(--accent);
  background-color: #161616;
  font-weight: bold;
}

.add {
  width: 26px;
  background-color: #2bab93;
}

/* side panes */
.pane {
  flex: none;
  width: 117px;
  border-left: 1px solid var(--line);
}

.viz {
  border-left-color: #1c1c1c;
}

.pane header {
  display: flex;
  align-items: center;
  justify-content: space-between;
  height: 24px;
  padding: 0 7px 0 4px;
}

.pane h2 {
  font-size: 11px;
  font-weight: bold;
}

.pane h4 {
  padding-left: 4px;
  font-size: 8px;
}

.modes {
  display: flex;
  gap: 22px;
  padding: 2px 0 0 4px;
}

.modes button {
  width: 21px;
  height: 22px;
}

.modes .on {
  background-color: #2c2c2c;
}

.notch {
  display: block;
  width: 100%;
  height: 8px;
  overflow: hidden;
}

.visuals {
  display: grid;
  grid-template-columns: repeat(6, 1fr);
  grid-auto-rows: 18px;
  padding: 5px 4px 0 3px;
}

.visuals svg {
  width: 13px;
  height: 13px;
}

.visuals text {
  fill: #5ab2ee;
  font-size: 6px;
}

.letter {
  color: #4db4ee;
  font-size: 11px;
}

.more {
  font-size: 6px;
}

.wells {
  display: flex;
  flex-direction: column;
  gap: 7px;
  margin-top: 3px;
  padding: 6px 3px 0 2px;
  border-top: 1px solid #c4c4c4;
}

.wells h5 {
  padding-left: 5px;
  font-size: 8px;
  font-weight: normal;
}

.wells h5.bold {
  font-weight: bold;
}

.drop {
  padding: 2px 5px;
  border: 1px dotted #7c7c7c;
  line-height: 12px;
  white-space: nowrap;
}

.wells h5 + .drop {
  margin-top: -4px;
}

.switch {
  display: flex;
  align-items: center;
  justify-content: space-between;
  padding: 0 11px 0 5px;
}

.switch span {
  position: relative;
}

.switch input {
  appearance: none;
  display: block;
  width: 21px;
  height: 10px;
  margin: 0;
  border: 1px solid #a0a0a0;
  border-radius: 5px;
}

.switch input::before {
  content: "";
  display: block;
  width: 6px;
  height: 6px;
  margin: 1px;
  border-radius: 50%;
  background-color: #ccc;
}

.switch b {
  position: absolute;
  top: 0;
  right: 2px;
  font-size: 7px;
  font-weight: normal;
}

.switch input:checked {
  border-color: #1d9d85;
  background-color: #168a74;
}

.switch input:checked::before {
  margin-left: 12px;
  background-color: #fff;
}

.switch input:checked + b {
  right: auto;
  left: 3px;
}

.fields {
  width: 118px;
}

.field-search {
  display: flex;
  align-items: center;
  gap: 5px;
  height: 16px;
  margin: 5px 2px 9px;
  padding-left: 8px;
  border: 1px solid #8a8a8a;
  border-radius: 3px;
  background-color: #242424;
  color: #b5b5b5;
  font-size: 9px;
}

.field-search input,
.top-search input,
.task-search input {
  flex: 1;
}

.table-row {
  gap: 4px;
  margin-left: 10px;
}

.table-row svg + svg {
  margin-right: -1px;
}

/* status bar */
.status {
  display: flex;
  flex: none;
  align-items: center;
  justify-content: space-between;
  height: 16px;
  padding: 0 12px 0 2px;
  border-bottom: 1px solid #3c3c3c;
}

.zoom {
  display: flex;
  align-items: center;
  gap: 4px;
}

.zoom input {
  appearance: none;
  width: 65px;
  height: 7px;
  margin: 0;
  background: linear-gradient(#bbb, #bbb) center / 100% 1px no-repeat;
}

.zoom input::-webkit-slider-thumb {
  appearance: none;
  width: 3px;
  height: 7px;
  background-color: #fff;
}

.zoom span {
  margin: 0 8px 0 6px;
}

/* taskbar */
.taskbar {
  position: relative;
  display: flex;
  flex: none;
  align-items: center;
  height: 30px;
  padding-right: 12px;
  background-color: #1c1c1c;
}

.weather {
  position: relative;
  display: flex;
  gap: 1px;
  flex: 0 0 304px;
  padding-left: 12px;
  font: 8px/11px "DejaVu Sans", sans-serif;
}

.weather text {
  fill: #222;
  font-size: 7px;
}

.task-search {
  display: flex;
  align-items: center;
  gap: 7px;
  width: 143px;
  height: 21px;
  margin: 0 2px 0 9px;
  padding-left: 7px;
  border: 1px solid #4c4c4c;
  border-radius: 11px;
  background-color: #383838;
  font-size: 9px;
}

.apps {
  display: flex;
  flex: 0 0 225px;
  justify-content: space-between;
}

.apps .app {
  position: relative;
  width: 25px;
  height: 26px;
  border-radius: 3px;
}

.apps svg {
  width: 17px;
  height: 17px;
}

.app.run::after {
  content: "";
  position: absolute;
  bottom: 0;
  width: 4px;
  height: 2px;
  border-radius: 1px;
  background-color: #a8a8a8;
}

.app.current {
  background-color: #2d2d2d;
}

.app.current::after {
  width: 10px;
  background-color: #4cc4f8;
}

.app em {
  position: absolute;
  top: 1px;
  right: 0;
  min-width: 10px;
  padding: 0 1px;
  border-radius: 5px;
  background-color: #4fc6ee;
  color: #102030;
  font-size: 7px;
  font-style: normal;
}

.app em.red {
  border-radius: 3px;
  background-color: #e03a34;
  color: #fff;
}

.tray {
  display: flex;
  align-items: center;
  gap: 4px;
  margin-left: auto;
}

.lang {
  margin: 0 8px;
}

.tray time {
  margin-left: 5px;
  line-height: 11px;
  text-align: right;
}

.seal {
  position: absolute;
  left: 0;
  bottom: -1px;
  width: 56px;
  height: 56px;
  pointer-events: none;
  opacity: .7;
}
```

FILE: charts.js
```js
const NS = 'http://www.w3.org/2000/svg'

function add(parent, tag, attrs, text) {
  const node = document.createElementNS(NS, tag)
  for (const key in attrs) node.setAttribute(key, attrs[key])
  if (text) node.textContent = text
  parent.appendChild(node)
  return node
}

const months = ['January', 'February', 'March', 'April', 'May', 'June', 'July', 'August', 'September', 'October', 'November', 'December']

// side: a = label above the point, b = below
const series = [
  { name: '2021', color: '#6418c0', side: 'abaaaababaab', values: [77, 66, 84, 84.2, 92.4, 69, 65.3, 70, 64.3, 66.7, 72.3, 69.4] },
  { name: '2022', color: '#6e6e6e', side: 'abaaabbabaab', values: [63.4, 52, 53.4, 60.2, 51, 50.4, 55.4, 55, 47, 49.3, 46.4, 46] }
]

function drawTrend() {
  const svg = document.querySelector('#trend')
  const x = i => 49 + i * 29.1
  const y = v => 144 - (v - 40) * 2.017

  add(svg, 'text', { x: 8, y: 13, class: 'axis legend' }, 'Year')
  series.forEach((s, i) => {
    add(svg, 'circle', { cx: 28 + i * 25, cy: 11, r: 2.5, fill: s.color })
    add(svg, 'text', { x: 32 + i * 25, y: 14 }, s.name)
  })

  for (let v = 40; v <= 100; v += 20) {
    add(svg, 'text', { x: 33, y: y(v) + 2, 'text-anchor': 'end' }, v + 'K')
  }

  series.forEach(s => {
    const points = s.values.map((v, i) => x(i) + ',' + y(v)).join(' ')
    add(svg, 'polyline', { points, fill: 'none', stroke: s.color, 'stroke-width': 1.4 })
    s.values.forEach((v, i) => {
      const dy = s.side[i] === 'a' ? -4 : 10
      add(svg, 'text', { x: x(i), y: y(v) + dy, 'text-anchor': 'middle' }, Math.round(v) + 'K')
    })
  })

  months.forEach((m, i) => {
    add(svg, 'text', { transform: `translate(${x(i) - 2} 151) rotate(-34)`, 'text-anchor': 'end' }, m)
  })

  add(svg, 'text', { transform: 'translate(15 83) rotate(-90)', class: 'axis', 'text-anchor': 'middle' }, 'Sum of Sales')
  add(svg, 'text', { x: 209, y: 182, class: 'axis', 'text-anchor': 'middle' }, 'Month')
}

function drawYears() {
  const svg = document.querySelector('#years')
  const y = v => 164 - v * 173.5
  const bars = [['2021', 0.88, '#8250c4'], ['2022', 0.63, '#808080']]

  for (let i = 0; i <= 4; i++) {
    add(svg, 'text', { x: 32, y: y(i * 0.2) + 2, 'text-anchor': 'end' }, (i * 0.2).toFixed(1) + 'M')
  }

  bars.forEach(([year, value, color], i) => {
    const left = 37 + i * 142
    add(svg, 'rect', { x: left, y: y(value), width: 38, height: 164 - y(value), fill: color })
    add(svg, 'text', { x: left + 19, y: 173, 'text-anchor': 'middle' }, year)
  })

  add(svg, 'text', { transform: 'translate(14 86) rotate(-90)', class: 'axis', 'text-anchor': 'middle' }, 'Sum of Sales')
  add(svg, 'text', { x: 127, y: 182, class: 'axis', 'text-anchor': 'middle' }, 'Year')
}

drawTrend()
drawYears()
```
